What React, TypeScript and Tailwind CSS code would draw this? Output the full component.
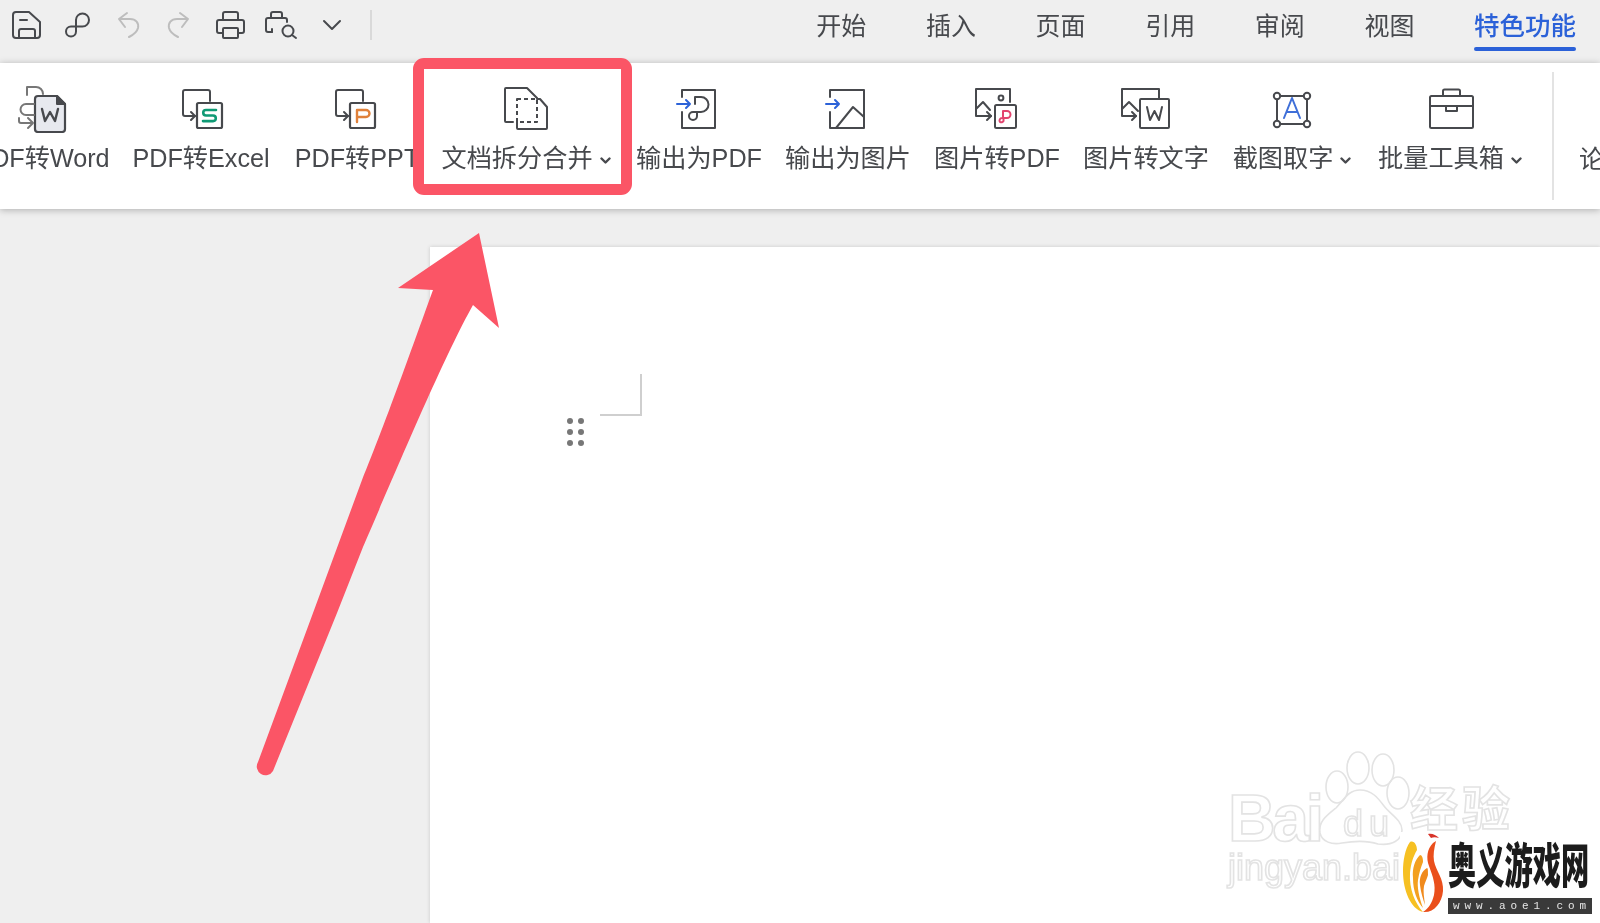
import React from "react";

const FONT = "[font-family:'Liberation_Sans','Noto_Sans_CJK_SC',sans-serif]";
const INK = "#47494d";

function Ico({ w = 60, h = 48, children }: { w?: number; h?: number; children: React.ReactNode }) {
  return (
    <svg width={w} height={h} viewBox={`0 0 ${w} ${h}`} fill="none" stroke={INK} strokeWidth={2} strokeLinecap="round" strokeLinejoin="round" className="block shrink-0">
      {children}
    </svg>
  );
}

function Tool({ children, gray }: { children: React.ReactNode; gray?: boolean }) {
  return (
    <div className="w-[51px] flex justify-center">
      <svg width={40} height={40} viewBox="0 0 40 40" fill="none" stroke={gray ? "#bdbdbd" : INK} strokeWidth={2} strokeLinecap="round" strokeLinejoin="round">
        {children}
      </svg>
    </div>
  );
}

function Chevron() {
  return (
    <svg width={11} height={8} viewBox="0 0 11 8" className="ml-[7px] mt-[3px] shrink-0" fill="none" stroke={INK} strokeWidth={2.4} strokeLinecap="round" strokeLinejoin="round">
      <polyline points="1.5,1.5 5.5,5.5 9.5,1.5" />
    </svg>
  );
}

function Convert({ children, dx = 0 }: { children: React.ReactNode; dx?: number }) {
  return (
    <Ico>
      <g transform={`translate(${dx} 0)`}>
        <path d="M39 16 V7 a2 2 0 0 0-2-2 H14 a2 2 0 0 0-2 2 V29 a2 2 0 0 0 2 2 H24" />
        <path d="M20 27 l4 4 -4 4" />
        <rect x="26" y="18" width="25" height="25" rx="1.5" strokeWidth={2.2} />
        {children}
      </g>
    </Ico>
  );
}

const items: { label: string; w: string; caret?: boolean; icon: React.ReactNode }[] = [
  {
    label: "PDF转Word",
    w: "w-[160px]",
    icon: (
      <Ico>
        <path d="M23 14 a3 3 0 0 1 3-3 H45 L53 19 V44 a3 3 0 0 1-3 3 H26 a3 3 0 0 1-3-3 Z" fill="#e7e9ef" strokeWidth={2.2} />
        <path d="M45 11 L53 19 H45 Z" fill={INK} />
        <polyline points="30,24 33,36 38,27 43,36 46,24" strokeWidth={2.4} />
        <path d="M15 10 V2 H24 a7 7 0 0 1 7 7" stroke="#777" />
        <path d="M22 19 H14 a5.500 5.500 0 0 0 0 11 H22" stroke="#777" />
        <path d="M7 33 v3 a2 2 0 0 0 2 2 H21 M16 33 l5 5 -5 5" stroke="#777" />
      </Ico>
    ),
  },
  {
    label: "PDF转Excel",
    w: "w-[158px]",
    icon: (
      <Convert>
        <path d="M45 25 H35 a2.700 2.700 0 0 0 0 5.500 H42 a2.800 2.800 0 0 1 0 5.600 H32" stroke="#0f9a75" strokeWidth={2.6} />
      </Convert>
    ),
  },
  {
    label: "PDF转PPT",
    w: "w-[154px]",
    icon: (
      <Convert dx={-3}>
        <path d="M33 37 V25 H42 a3.500 3.500 0 0 1 0 7 H33" stroke="#e0813a" strokeWidth={2.4} />
      </Convert>
    ),
  },
  {
    label: "文档拆分合并",
    w: "w-[184px]",
    caret: true,
    icon: (
      <Ico>
        <path d="M17 37 H10 a1 1 0 0 1-1-1 V4 a1 1 0 0 1 1-1 H31 L41 13" />
        <path d="M21 37 V43 a1 1 0 0 0 1 1 H50 a1 1 0 0 0 1-1 V22 L44 14 H41" />
        <rect x="21" y="14" width="20" height="23" strokeDasharray="4 3" strokeLinecap="butt" />
      </Ico>
    ),
  },
  {
    label: "输出为PDF",
    w: "w-[162px]",
    icon: (
      <Ico>
        <path d="M13 12 V5 H46 V43 H13 V27" />
        <path d="M8 19 H21 M17 15 l4 4 -4 4" stroke="#2c62d8" />
        <path d="M26 19 V12 H32 a7.500 7.500 0 0 1 0 15 H24 a4 4 0 0 0 -4 4 a4 4 0 0 0 8 0 V27" />
      </Ico>
    ),
  },
  {
    label: "输出为图片",
    w: "w-[136px]",
    icon: (
      <Ico>
        <path d="M12 12 V5 H46 V43 H12 V27" />
        <path d="M8 19 H21 M17 15 l4 4 -4 4" stroke="#2c62d8" />
        <path d="M18 43 L35 22 L46 32" />
      </Ico>
    ),
  },
  {
    label: "图片转PDF",
    w: "w-[162px]",
    icon: (
      <Ico>
        <path d="M43 17 V4 H9 V31 H24" />
        <path d="M20 27 l4 4 -4 4" />
        <path d="M9 24 L16 17 L23 25" />
        <circle cx="34" cy="13" r="2.400" />
        <rect x="28" y="20" width="21" height="23" rx="1.500" />
        <path d="M36 33 V26 H40 a3.500 3.500 0 0 1 0 7 H35 a2.500 2.500 0 0 0 -2 4 a2.500 2.500 0 0 0 3.500 -1 V33" stroke="#e2446f" />
      </Ico>
    ),
  },
  {
    label: "图片转文字",
    w: "w-[136px]",
    icon: (
      <Ico>
        <path d="M43 13 V4 H6 V31 H20" />
        <path d="M16 27 l4 4 -4 4" />
        <path d="M6 24 L13 17 L22 26" />
        <rect x="24" y="14" width="29" height="29" rx="1" />
        <polyline points="31,22 34,35 38.500,26 43,35 46,22" />
      </Ico>
    ),
  },
  {
    label: "截图取字",
    w: "w-[156px]",
    caret: true,
    icon: (
      <Ico>
        <rect x="15" y="11" width="30" height="28" />
        <g fill="#fff">
          <circle cx="15" cy="11" r="3.200" />
          <circle cx="45" cy="11" r="3.200" />
          <circle cx="15" cy="39" r="3.200" />
          <circle cx="45" cy="39" r="3.200" />
        </g>
        <path d="M22 33 L30 13 L38 33 M25 27 H35" stroke="#3f6fd8" />
      </Ico>
    ),
  },
  {
    label: "批量工具箱",
    w: "w-[160px]",
    caret: true,
    icon: (
      <Ico>
        <rect x="10" y="11" width="43" height="32" rx="1.500" />
        <path d="M10 21 H53" />
        <path d="M23 11 V6 a1.500 1.500 0 0 1 1.500-1.500 H38.500 a1.500 1.500 0 0 1 1.500 1.500 V11" />
        <path d="M26 21 V26 H37 V21" />
      </Ico>
    ),
  },
];

const tabs = ["开始", "插入", "页面", "引用", "审阅", "视图"];

export default function App() {
  return (
    <div className={`relative w-[1600px] h-[923px] overflow-hidden bg-[#efefef] flex flex-col blur-[0.4px] ${FONT}`}>
      {/* Title row */}
      <header className="h-[63px] shrink-0 flex items-start bg-[#efefef]">
        <div className="flex items-center h-[50px]">
          <Tool>
            <path d="M10 7 H23 L34 17 V30 a3 3 0 0 1-3 3 H10 a3 3 0 0 1-3-3 V10 a3 3 0 0 1 3-3 Z" />
            <path d="M14 15 H21" />
            <path d="M13 33 V26 a2 2 0 0 1 2-2 H27 a2 2 0 0 1 2 2 V33" />
          </Tool>
          <Tool>
            <path d="M19 21 V15 a6.500 6.500 0 0 1 6.500-6.500 a6.500 6.500 0 0 1 0 13 H14 a5 5 0 0 0 0 10 a5 5 0 0 0 5-5 V21" />
          </Tool>
          <Tool gray>
            <path d="M19 8 L11 14 L17 22 M11 14 H22 C28 14 31 18 30 23 C29 27 25 30 21 32" />
          </Tool>
          <Tool gray>
            <path d="M21 8 L29 14 L23 22 M29 14 H18 C12 14 9 18 10 23 C11 27 15 30 19 32" />
          </Tool>
          <Tool>
            <path d="M13 15 V9 a2 2 0 0 1 2-2 H26 a2 2 0 0 1 2 2 V15" />
            <path d="M13 28 H9 a2 2 0 0 1-2-2 V17 a2 2 0 0 1 2-2 H32 a2 2 0 0 1 2 2 V26 a2 2 0 0 1-2 2 H28" />
            <rect x="13" y="23" width="15" height="10" rx="1" />
          </Tool>
          <Tool>
            <path d="M10 13 V9 a2 2 0 0 1 2-2 H19 a2 2 0 0 1 2 2 V13" />
            <path d="M11 27 H7 a2 2 0 0 1-2-2 V15 a2 2 0 0 1 2-2 H24 a2 2 0 0 1 2 2 V17" />
            <path d="M11 27 V24" />
            <circle cx="27" cy="26" r="5.500" />
            <path d="M31 30 L35 33" />
          </Tool>
          <Tool>
            <polyline points="12,16 20,24 28,16" />
          </Tool>
          <div className="ml-[13px] w-[2px] h-[30px] bg-[#d9d9d9]" />
        </div>
        <nav className="ml-auto mr-[24px] flex gap-[59.6px]">
          {tabs.map((t) => (
            <div key={t} className="h-[50px] leading-[52px] text-[25px] text-[#47494d]">
              {t}
            </div>
          ))}
          <div className="flex flex-col">
            <div className="h-[50px] leading-[52px] text-[25.5px] font-medium text-[#2b61d8]">特色功能</div>
            <div className="-mt-[3px] h-[4px] rounded-full bg-[#2b61d8]" />
          </div>
        </nav>
      </header>

      {/* Ribbon */}
      <section className="relative z-10 h-[146px] shrink-0 bg-white flex shadow-[0_1px_7px_rgba(0,0,0,0.28)] overflow-hidden">
        <div className="flex shrink-0 -ml-[38px]">
          {items.map((it) => (
            <div key={it.label} className={`${it.w} shrink-0 flex flex-col items-center pt-[22px]`}>
              {it.icon}
              <div className="mt-[9px] h-[34px] flex items-center justify-center whitespace-nowrap text-[25.2px] text-[#47494d]">
                {it.label}
                {it.caret && <Chevron />}
              </div>
            </div>
          ))}
        </div>
        <div className="ml-[22px] mt-[9px] w-[2px] h-[128px] shrink-0 bg-[#e3e3e3]" />
        <div className="ml-[25px] mt-[79px] h-[34px] leading-[34px] text-[25.2px] text-[#47494d] whitespace-nowrap">论文</div>
      </section>

      {/* Document area */}
      <main className="flex-1 pt-[38px] pl-[430px] min-h-0">
        <div className="h-full bg-white shadow-[0_0_4px_rgba(0,0,0,0.16)] pl-[137px] pt-[127px]">
          <div className="flex flex-col w-[75px]">
            <div className="ml-[33px] w-[42px] h-[42px] border-r-2 border-b-2 border-[#cfcfcf]" />
            <div className="mt-[2px] grid grid-cols-2 gap-x-[5px] gap-y-[5px] w-[16px]">
              {[0, 1, 2, 3, 4, 5].map((i) => (
                <span key={i} className="w-[6px] h-[6px] rounded-full bg-[#777]" />
              ))}
            </div>
          </div>
        </div>
      </main>

      {/* Baidu watermark */}
      <svg className="absolute left-0 top-0 pointer-events-none z-20" width={1600} height={923} viewBox="0 0 1600 923" fill="none">
        <g stroke="#e3e3e3" strokeWidth={1.6}>
          <text x="1228" y="841" fontFamily="'Liberation Sans',sans-serif" fontWeight="700" fontSize="66" textLength="96">Bai</text>
          <text x="1343" y="836" fontFamily="'Liberation Sans',sans-serif" fontSize="36" textLength="46">du</text>
          <ellipse cx="1358" cy="768" rx="11" ry="16" />
          <ellipse cx="1383" cy="770" rx="11" ry="16" />
          <ellipse cx="1337" cy="787" rx="11" ry="16" />
          <ellipse cx="1398" cy="793" rx="11" ry="16" />
          <path d="M1360 790 c-12 0-16 10-24 18 c-10 8-18 14-16 25 c2 9 12 12 22 10 c12-2 24-3 36 1 c14 2 24-4 24-14 c0-10-12-16-18-24 c-6-8-12-16-24-16 Z" />
          <text x="1410" y="826" fontFamily="'Noto Sans CJK SC',sans-serif" fontWeight="700" fontSize="48" textLength="100">经验</text>
          <text x="1228" y="880" fontFamily="'Liberation Sans',sans-serif" fontSize="36" textLength="172">jingyan.bai</text>
        </g>
      </svg>

      {/* 奥义游戏网 logo */}
      <div className="absolute z-30 right-0 bottom-0 w-[200px] h-[91px] bg-white flex pl-[3px] pt-[1px]">
        <svg width={41} height={82} viewBox="0 0 41 82" className="shrink-0">
          <path d="M25 1 c4-1 8 1 11 4 c-3-1-6-1-8 0 Z" fill="#d8342a" />
          <path d="M7 9 C2 16 0 28 0 38 C0 58 8 76 20 79 C12 70 6 56 7 40 C8 30 10 24 14 17 C14 12 11 7 7 9 Z" fill="#f6c022" />
          <path d="M17 22 C12 27 9 35 10 45 C10 58 14 68 20 75 C16 64 14 54 15 47 C16 40 18 34 20 29 C20 25 19 22 17 22 Z" fill="#f3a01f" />
          <path d="M24 35 C19 38 16 44 17 52 C18 60 20 66 22 72 C21 64 20 58 21 53 C22 49 24 46 25 42 C25 38 25 35 24 35 Z" fill="#f08a1d" />
          <path d="M30 10 C24 16 23 25 26 33 C30 44 33 52 31 62 C29 70 26 75 20 79 C31 80 39 70 40 58 C41 46 33 38 31 28 C30 22 31 16 33 8 Z" fill="#ea4f1c" />
        </svg>
        <div className="ml-[4px] flex flex-col w-[144px]">
          <div className="h-[59px] flex items-center overflow-visible">
            <div className="text-[34px] font-black whitespace-nowrap tracking-[0px] leading-none text-[#1c1c1c] origin-left scale-x-[0.83] scale-y-[1.42] [font-family:'Noto_Sans_CJK_SC',sans-serif]">
              奥义游戏网
            </div>
          </div>
          <div className="mt-[6px] h-[16px] bg-[#3a3a3a] text-[#e6e6e6] text-[11px] leading-[16px] pl-[5px] tracking-[4.9px] whitespace-nowrap overflow-hidden [font-family:'Liberation_Mono',monospace]">
            www.aoe1.com
          </div>
        </div>
      </div>

      {/* Red annotation box */}
      <div className="absolute z-40 left-[413px] top-[58px] w-[219px] h-[137px] rounded-[11px] border-[11px] border-[#fb5566]" />

      {/* Red annotation arrow */}
      <svg className="absolute left-0 top-0 z-40 pointer-events-none" width={1600} height={923} viewBox="0 0 1600 923">
        <path d="M479 233 L398 288 L433 290 C422 320 385 425 362 480 L313 613 L258 762 A8.500 8.500 0 0 0 273 771 L337 613 L363 547 C388 490 442 360 473 305 L499 328 Z" fill="#fb5566" />
      </svg>
    </div>
  );
}
